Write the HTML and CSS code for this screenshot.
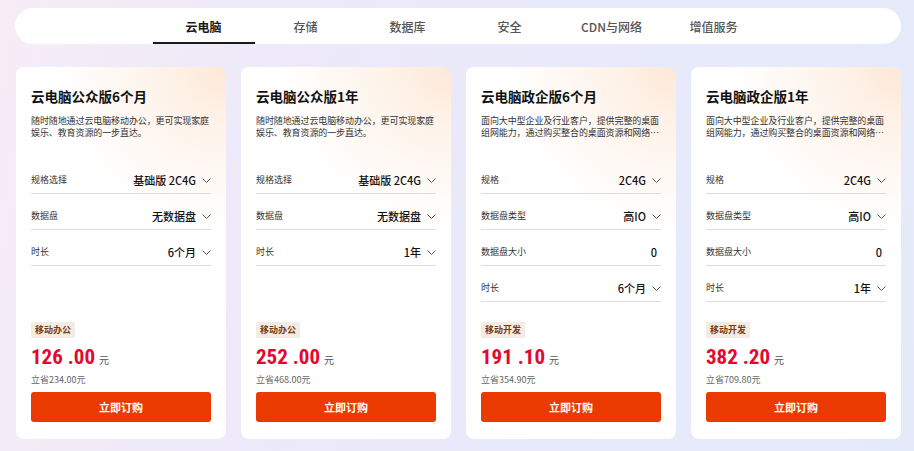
FILE: index.html
```html
<!DOCTYPE html>
<html lang="zh-CN">
<head>
<meta charset="utf-8">
<title>云电脑</title>
<link rel="stylesheet" href="styles.css">
</head>
<body>
<div class="page">
  <nav class="tabbar">
    <div class="tabs">
      <a class="tab active">云电脑</a>
      <a class="tab">存储</a>
      <a class="tab">数据库</a>
      <a class="tab">安全</a>
      <a class="tab">CDN与网络</a>
      <a class="tab">增值服务</a>
    </div>
  </nav>

  <div class="cards">
    <div class="card">
      <h3 class="title">云电脑公众版6个月</h3>
      <p class="desc">随时随地通过云电脑移动办公，更可实现家庭娱乐、教育资源的一步直达。</p>
      <div class="rows">
        <div class="row"><span class="label">规格选择</span><span class="value">基础版 2C4G<svg class="chev" viewBox="0 0 9 5"><polyline points="0.5,0.5 4.5,4.5 8.5,0.5"/></svg></span></div>
        <div class="row"><span class="label">数据盘</span><span class="value">无数据盘<svg class="chev" viewBox="0 0 9 5"><polyline points="0.5,0.5 4.5,4.5 8.5,0.5"/></svg></span></div>
        <div class="row"><span class="label">时长</span><span class="value">6个月<svg class="chev" viewBox="0 0 9 5"><polyline points="0.5,0.5 4.5,4.5 8.5,0.5"/></svg></span></div>
      </div>
      <div class="bottom">
        <span class="tag">移动办公</span>
        <div class="price"><span class="num">126 .00</span><span class="unit">元</span></div>
        <div class="save">立省234.00元</div>
        <button class="buy">立即订购</button>
      </div>
    </div>

    <div class="card">
      <h3 class="title">云电脑公众版1年</h3>
      <p class="desc">随时随地通过云电脑移动办公，更可实现家庭娱乐、教育资源的一步直达。</p>
      <div class="rows">
        <div class="row"><span class="label">规格选择</span><span class="value">基础版 2C4G<svg class="chev" viewBox="0 0 9 5"><polyline points="0.5,0.5 4.5,4.5 8.5,0.5"/></svg></span></div>
        <div class="row"><span class="label">数据盘</span><span class="value">无数据盘<svg class="chev" viewBox="0 0 9 5"><polyline points="0.5,0.5 4.5,4.5 8.5,0.5"/></svg></span></div>
        <div class="row"><span class="label">时长</span><span class="value">1年<svg class="chev" viewBox="0 0 9 5"><polyline points="0.5,0.5 4.5,4.5 8.5,0.5"/></svg></span></div>
      </div>
      <div class="bottom">
        <span class="tag">移动办公</span>
        <div class="price"><span class="num">252 .00</span><span class="unit">元</span></div>
        <div class="save">立省468.00元</div>
        <button class="buy">立即订购</button>
      </div>
    </div>

    <div class="card">
      <h3 class="title">云电脑政企版6个月</h3>
      <p class="desc">面向大中型企业及行业客户，提供完整的桌面组网能力，通过购买整合的桌面资源和网络资源，满足企业办公需求。</p>
      <div class="rows">
        <div class="row"><span class="label">规格</span><span class="value">2C4G<svg class="chev" viewBox="0 0 9 5"><polyline points="0.5,0.5 4.5,4.5 8.5,0.5"/></svg></span></div>
        <div class="row"><span class="label">数据盘类型</span><span class="value">高IO<svg class="chev" viewBox="0 0 9 5"><polyline points="0.5,0.5 4.5,4.5 8.5,0.5"/></svg></span></div>
        <div class="row"><span class="label">数据盘大小</span><span class="value plain">0</span></div>
        <div class="row"><span class="label">时长</span><span class="value">6个月<svg class="chev" viewBox="0 0 9 5"><polyline points="0.5,0.5 4.5,4.5 8.5,0.5"/></svg></span></div>
      </div>
      <div class="bottom">
        <span class="tag">移动开发</span>
        <div class="price"><span class="num">191 .10</span><span class="unit">元</span></div>
        <div class="save">立省354.90元</div>
        <button class="buy">立即订购</button>
      </div>
    </div>

    <div class="card">
      <h3 class="title">云电脑政企版1年</h3>
      <p class="desc">面向大中型企业及行业客户，提供完整的桌面组网能力，通过购买整合的桌面资源和网络资源，满足企业办公需求。</p>
      <div class="rows">
        <div class="row"><span class="label">规格</span><span class="value">2C4G<svg class="chev" viewBox="0 0 9 5"><polyline points="0.5,0.5 4.5,4.5 8.5,0.5"/></svg></span></div>
        <div class="row"><span class="label">数据盘类型</span><span class="value">高IO<svg class="chev" viewBox="0 0 9 5"><polyline points="0.5,0.5 4.5,4.5 8.5,0.5"/></svg></span></div>
        <div class="row"><span class="label">数据盘大小</span><span class="value plain">0</span></div>
        <div class="row"><span class="label">时长</span><span class="value">1年<svg class="chev" viewBox="0 0 9 5"><polyline points="0.5,0.5 4.5,4.5 8.5,0.5"/></svg></span></div>
      </div>
      <div class="bottom">
        <span class="tag">移动开发</span>
        <div class="price"><span class="num">382 .20</span><span class="unit">元</span></div>
        <div class="save">立省709.80元</div>
        <button class="buy">立即订购</button>
      </div>
    </div>
  </div>
</div>
</body>
</html>
```

FILE: styles.css
```css
* { box-sizing: border-box; }

html, body {
  margin: 0;
  padding: 0;
}

body {
  width: 914px;
  height: 451px;
  overflow: hidden;
  font-family: "Noto Sans CJK SC", "Noto Sans", sans-serif;
  color: #1a1a1a;
  background: linear-gradient(100deg, #f6edf6 0%, #ece9fa 35%, #e7eafb 70%, #e5eafa 100%);
}

.page {
  padding: 8px 13px 0 15px;
}

.tabbar {
  height: 36px;
  background: #fff;
  border-radius: 18px;
  display: flex;
  justify-content: center;
  padding-left: 1px;
}

.tabs {
  display: flex;
  height: 100%;
}

.tab {
  width: 102px;
  height: 100%;
  display: flex;
  align-items: center;
  justify-content: center;
  font-size: 12px;
  color: #555;
  font-weight: 500;
  border-bottom: 2px solid transparent;
  padding-top: 2px;
}

.tab.active {
  color: #1a1a1a;
  font-weight: 700;
  border-bottom-color: #1a1a1a;
}

.cards {
  display: flex;
  gap: 15px;
  margin-top: 23px;
  padding-left: 1px;
}

.card {
  width: 210px;
  height: 372px;
  border-radius: 8px;
  background:
    radial-gradient(ellipse 170px 160px at 100% 0%, #fde8d6 0%, #fef2e8 35%, rgba(255,255,255,0) 100%),
    #fff;
  padding: 19px 15px 17px;
  display: flex;
  flex-direction: column;
}

.title {
  margin: 0;
  font-size: 13.5px;
  line-height: 20px;
  font-weight: 700;
  color: #111;
}

.desc {
  margin: 9px 0 0;
  font-size: 9px;
  line-height: 12px;
  letter-spacing: -0.1px;
  color: #333;
  height: 24px;
  overflow: hidden;
  display: -webkit-box;
  -webkit-line-clamp: 2;
  -webkit-box-orient: vertical;
}

.rows {
  margin-top: 19px;
}

.row {
  height: 36px;
  padding-top: 15px;
  border-bottom: 1px solid #dcdcdc;
  display: flex;
  justify-content: space-between;
  align-items: flex-start;
}

.label {
  font-size: 9px;
  line-height: 14px;
  color: #333;
}

.value {
  display: flex;
  align-items: center;
  font-size: 11px;
  line-height: 14px;
  font-weight: 500;
  color: #111;
}

.value.plain {
  padding-right: 4px;
}

.chev {
  width: 9px;
  height: 5px;
  margin-left: 6px;
  fill: none;
  stroke: #555;
  stroke-width: 1;
}

.bottom {
  margin-top: auto;
  display: flex;
  flex-direction: column;
  align-items: flex-start;
}

.tag {
  height: 16px;
  line-height: 16px;
  padding: 0 4px;
  font-size: 9px;
  font-weight: 700;
  color: #7a3b12;
  background: #f3ece4;
  border-radius: 1px;
}

.price {
  margin-top: 7px;
  height: 24px;
  line-height: 24px;
  display: flex;
  align-items: baseline;
}

.num {
  font-family: "Liberation Sans Narrow", "Roboto Condensed", "DejaVu Sans Condensed", "Liberation Sans", sans-serif;
  font-stretch: condensed;
  font-size: 21px;
  font-weight: 700;
  color: #e4082e;
}

.unit {
  margin-left: 4px;
  font-size: 10px;
  color: #555;
}

.save {
  margin-top: 5px;
  font-size: 9px;
  line-height: 12px;
  color: #666;
}

.buy {
  margin-top: 6px;
  width: 100%;
  height: 30px;
  border: none;
  border-radius: 3px;
  background: #ea3a00;
  color: #fff;
  font-family: "Noto Sans CJK SC", sans-serif;
  font-size: 11px;
  font-weight: 700;
  padding: 0;
}
```
